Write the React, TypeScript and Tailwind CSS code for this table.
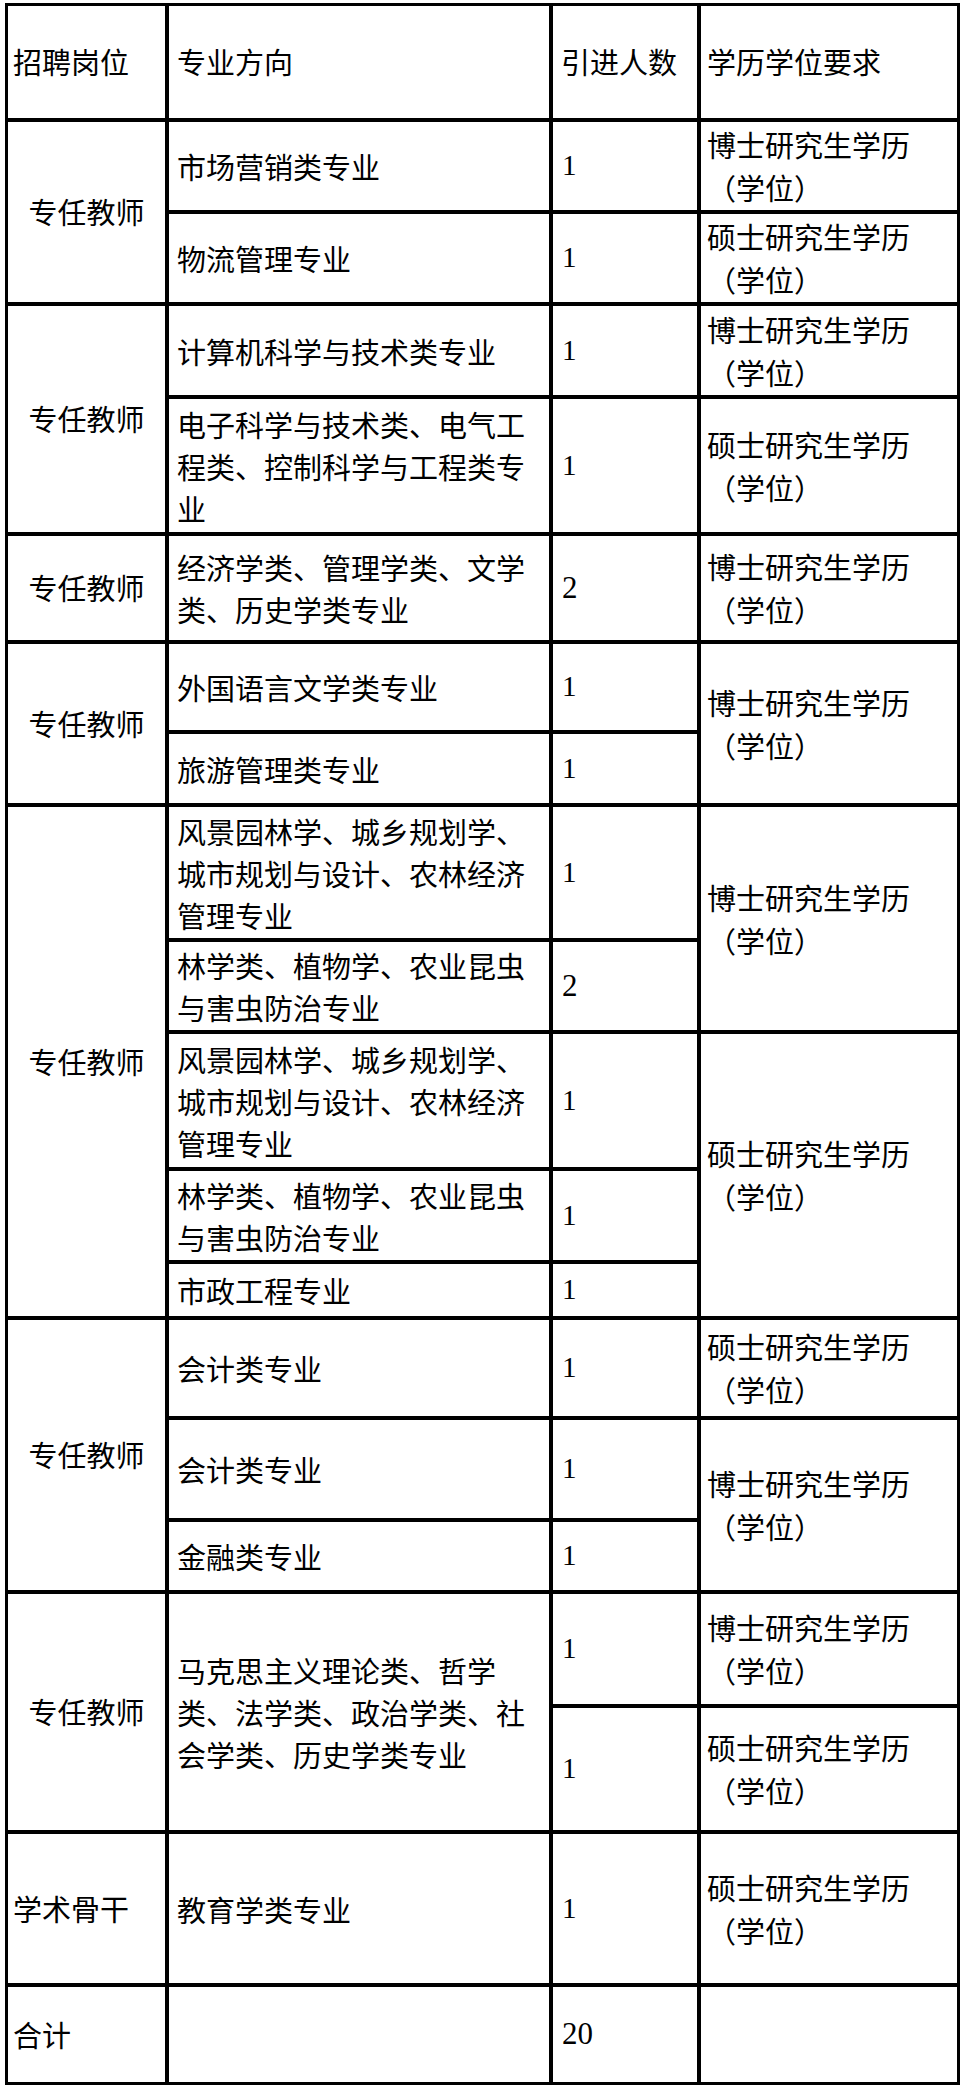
import { ReactNode } from 'react';
import clsx from 'clsx';

// 招聘岗位表 — grid with black gaps acting as the table rules

const Cell = ({ children, className }: { children?: ReactNode; className?: string }) => (
    <div className={clsx('bg-white flex items-center', className)}>{children}</div>
);

const Post = ({ children, span }: { children: ReactNode; span?: string }) => (
    <Cell className={clsx('justify-center', span)}>{children}</Cell>
);

const Major = ({ lines, span }: { lines: string[]; span?: string }) => (
    <Cell className={clsx('pl-2', span)}>
        <div className="leading-[42px] whitespace-nowrap">
            {lines.map((l, i) => (
                <span key={i}>
                    {i > 0 && <br />}
                    {l}
                </span>
            ))}
        </div>
    </Cell>
);

const Count = ({ n, big }: { n: string; big?: boolean }) => (
    <Cell className="pl-[9px]">
        <span className={clsx("font-['Liberation_Serif',serif]", big ? 'text-[31px]' : 'text-[29px]')}>{n}</span>
    </Cell>
);

const Degree = ({ kind, span }: { kind: '博士' | '硕士'; span?: string }) => (
    <Cell className={clsx('pl-[6px]', span)}>
        <div className="leading-[43px] whitespace-nowrap">
            {kind}研究生学历
            <br />
            （学位）
        </div>
    </Cell>
);

export default function App() {
    return (
        <div className="min-h-screen bg-white pt-[3px] pl-[5px] text-black font-['Noto_Sans_CJK_SC','Noto_Sans',sans-serif] text-[29px]">
            <div className="w-[955px] grid grid-cols-[157px_380px_144px_256px] grid-rows-[112px_88px_88px_89px_133px_104px_86px_69px_131px_88px_133px_89px_52px_96px_98px_68px_110px_122px_149px_95px] gap-[4px] p-[3px] bg-black">
                {/* header */}
                <Cell className="pl-[5px]">招聘岗位</Cell>
                <Cell className="pl-2">专业方向</Cell>
                <Cell className="pl-2">引进人数</Cell>
                <Cell className="pl-[6px]">学历学位要求</Cell>

                {/* group 1 */}
                <Post span="row-span-2">专任教师</Post>
                <Major lines={['市场营销类专业']} />
                <Count n="1" />
                <Degree kind="博士" />
                <Major lines={['物流管理专业']} />
                <Count n="1" />
                <Degree kind="硕士" />

                {/* group 2 */}
                <Post span="row-span-2">专任教师</Post>
                <Major lines={['计算机科学与技术类专业']} />
                <Count n="1" />
                <Degree kind="博士" />
                <Major lines={['电子科学与技术类、电气工', '程类、控制科学与工程类专', '业']} />
                <Count n="1" />
                <Degree kind="硕士" />

                {/* group 3 */}
                <Post>专任教师</Post>
                <Major lines={['经济学类、管理学类、文学', '类、历史学类专业']} />
                <Count n="2" big />
                <Degree kind="博士" />

                {/* group 4 */}
                <Post span="row-span-2">专任教师</Post>
                <Major lines={['外国语言文学类专业']} />
                <Count n="1" />
                <Degree kind="博士" span="row-span-2" />
                <Major lines={['旅游管理类专业']} />
                <Count n="1" />

                {/* group 5 */}
                <Post span="row-span-5">专任教师</Post>
                <Major lines={['风景园林学、城乡规划学、', '城市规划与设计、农林经济', '管理专业']} />
                <Count n="1" />
                <Degree kind="博士" span="row-span-2" />
                <Major lines={['林学类、植物学、农业昆虫', '与害虫防治专业']} />
                <Count n="2" big />
                <Major lines={['风景园林学、城乡规划学、', '城市规划与设计、农林经济', '管理专业']} />
                <Count n="1" />
                <Degree kind="硕士" span="row-span-3" />
                <Major lines={['林学类、植物学、农业昆虫', '与害虫防治专业']} />
                <Count n="1" />
                <Major lines={['市政工程专业']} />
                <Count n="1" />

                {/* group 6 */}
                <Post span="row-span-3">专任教师</Post>
                <Major lines={['会计类专业']} />
                <Count n="1" />
                <Degree kind="硕士" />
                <Major lines={['会计类专业']} />
                <Count n="1" />
                <Degree kind="博士" span="row-span-2" />
                <Major lines={['金融类专业']} />
                <Count n="1" />

                {/* group 7 */}
                <Post span="row-span-2">专任教师</Post>
                <Major
                    span="row-span-2"
                    lines={['马克思主义理论类、哲学', '类、法学类、政治学类、社', '会学类、历史学类专业']}
                />
                <Count n="1" />
                <Degree kind="博士" />
                <Count n="1" />
                <Degree kind="硕士" />

                {/* 学术骨干 */}
                <Cell className="pl-[5px]">学术骨干</Cell>
                <Major lines={['教育学类专业']} />
                <Count n="1" />
                <Degree kind="硕士" />

                {/* total */}
                <Cell className="pl-[5px]">合计</Cell>
                <Cell />
                <Count n="20" big />
                <Cell />
            </div>
        </div>
    );
}
